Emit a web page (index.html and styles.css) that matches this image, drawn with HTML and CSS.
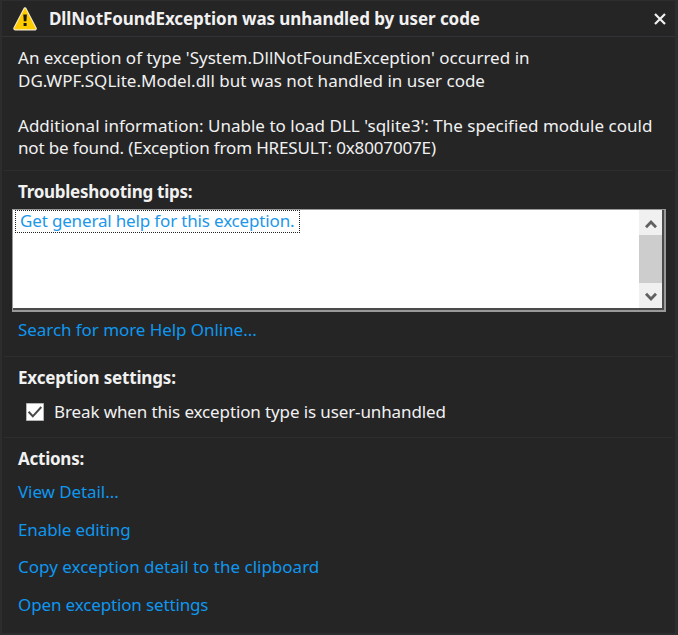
FILE: index.html
```html
<!DOCTYPE html>
<html lang="en">
<head>
<meta charset="utf-8">
<title>Exception Assistant</title>
<link rel="stylesheet" href="styles.css">
</head>
<body>
<main class="dialog">
  <header class="titlebar">
    <svg class="warning" viewBox="0 0 24 24"><path d="M12 2.2 22 21.6H2Z" fill="#ffcc00" stroke="#f4ead0" stroke-width="3.6" stroke-linejoin="round"/><path d="M12 2.2 22 21.6H2Z" fill="#ffcc00" stroke="#ffcc00" stroke-width="1.4" stroke-linejoin="round"/><path d="M10.3 7.6h3.6l-.5 6.6h-2.6zM10.6 16h3v3h-3z" fill="#191919"/></svg>
    <h1 class="t-title">DllNotFoundException was unhandled by user code</h1>
    <svg class="close" viewBox="0 0 14 12"><path d="M2 1 12 11M12 1 2 11" stroke="#f1f1f1" stroke-width="2.2"/></svg>
  </header>
  <section class="message">
    <p><span class="t-line1">An exception of type 'System.DllNotFoundException' occurred in</span><br><span class="t-line2">DG.WPF.SQLite.Model.dll but was not handled in user code</span></p>
    <p><span class="t-line3">Additional information: Unable to load DLL 'sqlite3': The specified module could</span><br><span class="t-line4">not be found. (Exception from HRESULT: 0x8007007E)</span></p>
  </section>
  <section class="tips">
    <h2 class="t-tips">Troubleshooting tips:</h2>
    <div class="listbox">
      <div class="items"><a class="focused"><span class="t-help">Get general help for this exception.</span></a></div>
      <div class="scrollbar">
        <svg class="arrow" viewBox="0 0 12 10"><path d="M1 8.2 6 3l5 5.2" fill="none" stroke="#606060" stroke-width="2.8"/></svg>
        <div class="thumb"></div>
        <svg class="arrow" viewBox="0 0 12 10"><path d="M1 1.8 6 7l5-5.2" fill="none" stroke="#606060" stroke-width="2.8"/></svg>
      </div>
    </div>
    <a class="link"><span class="t-search">Search for more Help Online...</span></a>
  </section>
  <section class="settings">
    <h2 class="t-settings">Exception settings:</h2>
    <label class="check"><svg class="box" viewBox="0 0 18 18"><path d="M.5.5h17v17H.5z" fill="#fdfdfd" stroke="#b5b5b5"/><path d="M2.6 8.8 6.8 13.3 15.3 4" fill="none" stroke="#484848" stroke-width="2"/></svg><span class="t-break">Break when this exception type is user-unhandled</span></label>
  </section>
  <section class="actions">
    <h2 class="t-actions">Actions:</h2>
    <a class="link"><span class="t-view">View Detail...</span></a>
    <a class="link"><span class="t-edit">Enable editing</span></a>
    <a class="link"><span class="t-copy">Copy exception detail to the clipboard</span></a>
    <a class="link"><span class="t-open">Open exception settings</span></a>
  </section>
</main>
</body>
</html>
```
FILE: styles.css
```css
* { box-sizing: border-box; }
body { margin: 0; background: #252526; }
.dialog {
  width: 678px;
  height: 635px;
  border: 2px solid #2d2d30;
  border-right-width: 3px;
  border-top-width: 1px;
  background: #252526;
  color: #f1f1f1;
  font: 17px/22.5px "Noto Sans", "Open Sans", sans-serif;
  white-space: nowrap;
  overflow: hidden;
}
h1, h2, p { margin: 0; font-size: inherit; line-height: inherit; }
h1, h2 { font-weight: 700; }
.titlebar { display: flex; align-items: center; height: 36px; padding: 0 8px 0 11px; border-bottom: 1px solid #333337; }
.titlebar h1 { padding-top: 1px; }
.warning { width: 24px; height: 24px; margin-right: 12px; }
.close { width: 14px; height: 12px; margin-left: auto; }
.message { height: 133px; padding: 10px 0 0 16px; }
.message p + p { margin-top: 22.5px; }
.tips, .settings, .actions { margin: 0 2px; border-top: 1px solid #2d2d30; padding-left: 14px; }
.tips { height: 186px; padding-top: 10px; }
.listbox { display: flex; width: 654px; height: 103px; margin: 5px 0 7px -6px; border: 1px solid #999; border-right-width: 2px; border-bottom-width: 2px; background: #fff; box-shadow: inset -2px -2px #4a4a4a; }
.items { flex: 1; padding: 0 0 0 2px; }
.focused { display: inline-flex; align-items: center; height: 23px; width: 285px; padding: 1px 0 0 4px; border: 1px dotted #222; color: #1c97ea; }
.scrollbar { display: flex; flex-direction: column; align-items: center; justify-content: space-between; width: 23px; margin: 0 2px 2px 0; background: #f0f0f0; padding: 9px 0 6px; }
.arrow { width: 12px; height: 10px; }
.thumb { width: 23px; height: 48px; margin-top: -3px; background: #cdcdcd; }
.link { display: block; color: #0e97ef; }
.settings { height: 81px; padding-top: 10px; }
.check { display: flex; align-items: center; margin: 11px 0 0 8px; }
.box { width: 18px; height: 18px; margin-right: 10px; }
.actions { padding-top: 10px; }
.actions .link { margin-top: 15px; }
.actions h2 + .link { margin-top: 10.5px; }

.t-title { letter-spacing: -0.07px; }
.t-tips { letter-spacing: -0.27px; }
.t-settings { letter-spacing: -0.16px; }
.t-actions { letter-spacing: -0.25px; }
.t-line1, .t-line3 { letter-spacing: 0.016px; }
.t-line4 { letter-spacing: -0.15px; }
.t-help { letter-spacing: -0.16px; }
.t-search { letter-spacing: -0.06px; }
.t-break { letter-spacing: -0.12px; }
.t-view { letter-spacing: -0.08px; }
.t-edit { letter-spacing: -0.12px; }
.t-open { letter-spacing: -0.14px; }
```
